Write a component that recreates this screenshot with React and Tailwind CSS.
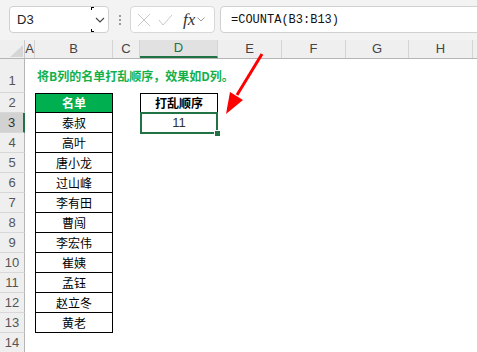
import React from "react";

const cols = [
  { key: "A", w: "w-[10px]" },
  { key: "B", w: "w-[78px]" },
  { key: "C", w: "w-[27px]" },
  { key: "D", w: "w-[78px]" },
  { key: "E", w: "w-[64px]" },
  { key: "F", w: "w-[64px]" },
  { key: "G", w: "w-[63px]" },
  { key: "H", w: "w-[64px]" },
];

const names = ["泰叔", "高叶", "唐小龙", "过山峰", "李有田", "曹闯", "李宏伟", "崔姨", "孟钰", "赵立冬", "黄老"];

function TopBar() {
  return (
    <div className="h-[40px] bg-[#f3f3f3] flex items-start pt-[6px]">
      {/* name box */}
      <div className="ml-[9px] w-[100px] h-[27px] bg-white border border-[#d0d0d0] rounded-[4px] flex items-center">
        <span className="pl-[7px] flex-1 text-[13px] text-[#222] font-['Liberation_Sans',sans-serif]">D3</span>
        <div className="relative w-[17px] h-full flex items-center justify-center">
          <span className="absolute left-0 top-0 w-[3px] h-[3px] border-l border-t border-black" />
          <span className="absolute left-0 bottom-0 w-[3px] h-[3px] border-l border-b border-black" />
          <svg width="10" height="6" viewBox="0 0 10 6">
            <path d="M1 1 L5 5 L9 1" fill="none" stroke="#444" strokeWidth="1.1" />
          </svg>
        </div>
      </div>
      {/* dots */}
      <div className="w-[21px] h-[27px] flex flex-col items-center justify-center gap-[2px]">
        <span className="w-[2px] h-[2px] bg-[#9a9a9a]" />
        <span className="w-[2px] h-[2px] bg-[#9a9a9a]" />
        <span className="w-[2px] h-[2px] bg-[#9a9a9a]" />
      </div>
      {/* icon box */}
      <div className="w-[85px] h-[27px] bg-white border border-[#d8d8d8] rounded-[4px] flex items-center pl-[6px] gap-[7px]">
        <svg width="14" height="14" viewBox="0 0 14 14">
          <path d="M1 1 L13 13 M13 1 L1 13" stroke="#c8c8c8" strokeWidth="1" />
        </svg>
        <svg width="15" height="12" viewBox="0 0 15 12">
          <path d="M1 6 L5 11 L14 1" fill="none" stroke="#c8c8c8" strokeWidth="1" />
        </svg>
        <span className="ml-[3px] text-[17px] italic text-[#333] font-['Liberation_Serif',serif] leading-none">fx</span>
        <svg width="8" height="5" viewBox="0 0 8 5" className="-ml-[5px]">
          <path d="M0.5 0.5 L4 4 L7.5 0.5" fill="none" stroke="#999" strokeWidth="1" />
        </svg>
      </div>
      {/* formula */}
      <div className="ml-[5px] flex-1 -mr-[10px] h-[27px] bg-white border border-[#d0d0d0] rounded-[4px] flex items-center pl-[10px]">
        <span className="text-[12px] text-[#111] font-['Liberation_Mono',monospace]">=COUNTA(B3:B13)</span>
      </div>
    </div>
  );
}

function ColumnHeader() {
  return (
    <div className="h-[19px] flex bg-[#efefef] border-b border-[#b5b5b5] text-[13px] text-[#444] font-['Liberation_Sans',sans-serif]">
      <div className="w-[25px] border-r border-[#c8c8c8] flex items-end justify-end pr-[1px] pb-[1px]">
        <svg width="13" height="12" viewBox="0 0 13 12">
          <path d="M13 0 L13 12 L0 12 Z" fill="#d6d6d6" />
        </svg>
      </div>
      {cols.map((c) => (
        <div
          key={c.key}
          className={
            c.key === "D"
              ? `${c.w} shrink-0 flex items-center justify-center bg-[#e1e1e1] text-[#217346] border-r border-[#d4d4d4] border-b-2 border-b-[#217346]`
              : `${c.w} shrink-0 flex items-center justify-center border-r border-[#d4d4d4]`
          }
        >
          {c.key}
        </div>
      ))}
      <div className="flex-1" />
    </div>
  );
}

function RowHead({ n, tall, active }) {
  return (
    <div
      className={
        active
          ? "w-[25px] shrink-0 flex items-center justify-center bg-[#d2d2d2] border-r-2 border-[#217346] border-b border-b-[#d8d8d8] text-[13px] text-[#333]"
          : tall
          ? "w-[25px] shrink-0 flex items-end justify-center pb-[2px] bg-[#efefef] border-r border-[#b5b5b5] border-b border-b-[#d8d8d8] text-[13px] text-[#555]"
          : "w-[25px] shrink-0 flex items-center justify-center bg-[#efefef] border-r border-[#b5b5b5] border-b border-b-[#d8d8d8] text-[13px] text-[#555]"
      }
    >
      {n}
    </div>
  );
}

export default function App() {
  return (
    <div className="relative w-[477px] h-[352px] overflow-hidden bg-white font-['Liberation_Sans','Noto_Sans_CJK_SC',sans-serif]">
      <TopBar />
      <ColumnHeader />

      {/* row 1 */}
      <div className="h-[34px] flex">
        <RowHead n={1} tall />
        <div className="w-[10px] shrink-0" />
        <div className="w-[78px] shrink-0 flex items-center">
          <span className="pl-[2px] whitespace-nowrap text-[12px] font-bold text-[#14b04a] font-['Noto_Sans_CJK_SC',sans-serif]">
            将B列的名单打乱顺序，效果如D列。
          </span>
        </div>
      </div>

      {/* row 2 */}
      <div className="h-[20px] flex">
        <RowHead n={2} />
        <div className="w-[10px] shrink-0" />
        <div className="w-[78px] shrink-0 bg-[#00b050] border border-black flex items-center justify-center text-[12px] font-bold text-white font-['Noto_Sans_CJK_SC',sans-serif]">
          名单
        </div>
        <div className="w-[27px] shrink-0" />
        <div className="w-[78px] shrink-0 border border-black flex items-center justify-center text-[12px] font-bold text-black font-['Noto_Sans_CJK_SC',sans-serif]">
          打乱顺序
        </div>
      </div>

      {/* rows 3-13 */}
      {names.map((name, i) => (
        <div key={name} className="h-[20px] flex">
          <RowHead n={i + 3} active={i === 0} />
          <div className="w-[10px] shrink-0" />
          <div className="w-[78px] shrink-0 border-x border-b border-black flex items-center justify-center text-[12px] text-black font-['Noto_Sans_CJK_SC',sans-serif]">
            {name}
          </div>
          {i === 0 && (
            <>
              <div className="w-[27px] shrink-0" />
              <div className="relative w-[78px] shrink-0 flex items-center justify-center text-[13px] text-[#333] font-['Liberation_Sans',sans-serif]">
                11
                <div className="absolute -top-px left-0 right-0 -bottom-px border-2 border-[#217346]" />
                <div className="absolute -right-[3px] -bottom-[4px] w-[7px] h-[7px] bg-[#217346] border border-white" />
              </div>
            </>
          )}
        </div>
      ))}

      {/* row 14 */}
      <div className="h-[20px] flex">
        <RowHead n={14} />
      </div>

      {/* red arrow */}
      <svg className="absolute left-0 top-0 pointer-events-none" width="477" height="352" viewBox="0 0 477 352">
        <line x1="262" y1="54" x2="237" y2="95" stroke="#ff0000" strokeWidth="3" />
        <path d="M226 114 L230 92 L243 100 Z" fill="#ff0000" />
      </svg>
    </div>
  );
}
